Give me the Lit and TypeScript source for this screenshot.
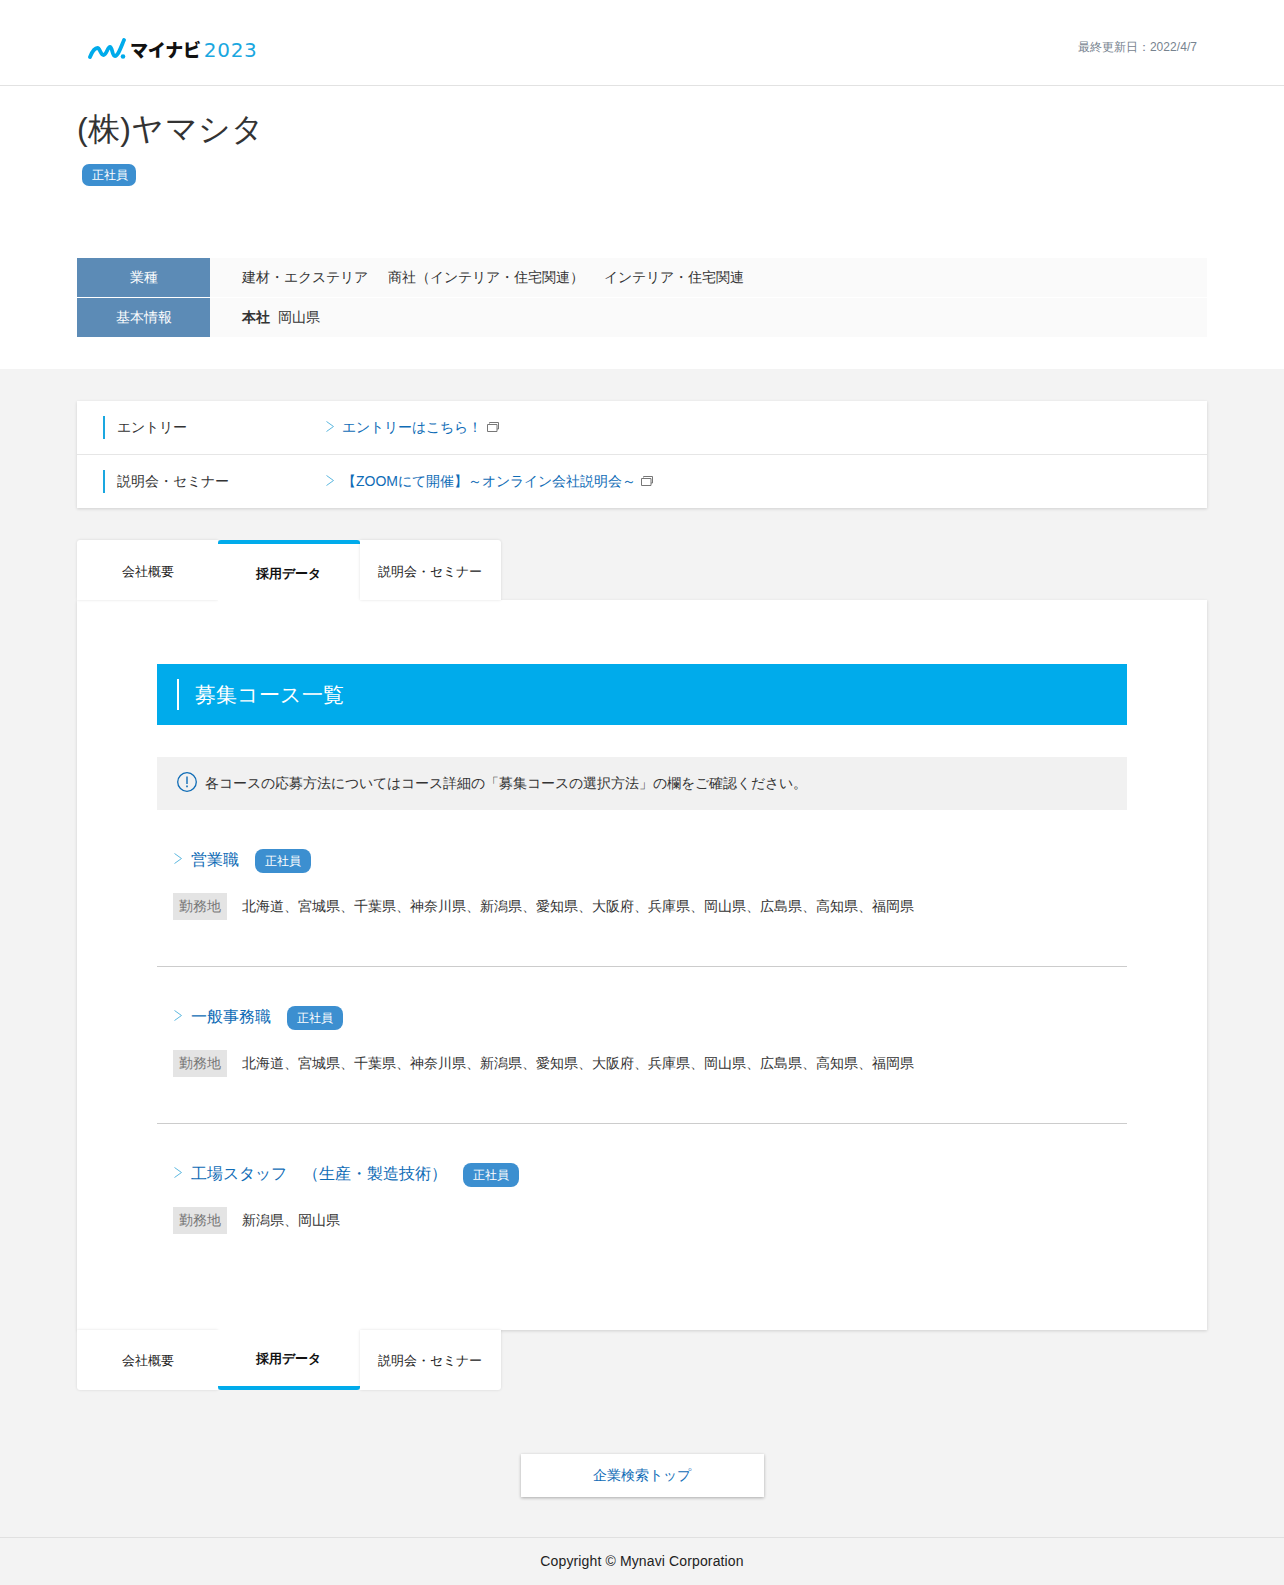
import { LitElement, html, css } from "lit";
import { customElement } from "lit/decorators.js";

const arrow = html`<svg class="arrow" viewBox="0 0 10 13" width="10" height="13"><path d="M1.5 1.5l7 5-7 5" fill="none" stroke="#5cb8e0" stroke-width="1"/></svg>`;
const ext = html`<svg class="ext" viewBox="0 0 12 10" width="12" height="10"><path d="M2.5 1.5V.5h9v6.5H10" fill="none" stroke="#777" stroke-width="1"/><path d="M.5 2.5h9.5v7H.5z" fill="none" stroke="#777" stroke-width="1"/></svg>`;
const courses = [
  { t: "営業職", p: "北海道、宮城県、千葉県、神奈川県、新潟県、愛知県、大阪府、兵庫県、岡山県、広島県、高知県、福岡県" },
  { t: "一般事務職", p: "北海道、宮城県、千葉県、神奈川県、新潟県、愛知県、大阪府、兵庫県、岡山県、広島県、高知県、福岡県" },
  { t: "工場スタッフ　（生産・製造技術）", p: "新潟県、岡山県" },
];

@customElement("app-root")
export class AppRoot extends LitElement {
  static styles = css`
    :host { display: block; background: #f3f3f3; color: #333; font-family: "Liberation Sans", sans-serif; font-size: 14px; line-height: 1.5; }
    a { color: #0f6cb6; text-decoration: none; }
    .wrap { width: 1130px; margin: 0 auto; }
    .head { height: 85px; background: #fff; border-bottom: 1px solid #e2e2e2; }
    .head .wrap { display: flex; justify-content: space-between; align-items: center; height: 85px; box-sizing: border-box; padding-top: 12px; }
    .logo { display: flex; align-items: center; margin-left: 11px; height: 30px; }
    .logo-jp { font-family: "Noto Sans CJK JP", sans-serif; font-weight: 900; font-size: 18px; letter-spacing: -0.2px; color: #111; margin-left: 4px; line-height: 30px; }
    .logo-yr { font-family: "DejaVu Sans", sans-serif; font-size: 20px; color: #1aa7e0; margin-left: 3px; letter-spacing: .7px; line-height: 30px; padding-top: 2px; }
    .updated { font-size: 12px; color: #77838f; margin-right: 10px; margin-top: -4px; letter-spacing: .05px; }
    .top { background: #fff; height: 283px; box-sizing: border-box; padding-top: 19px; }
    h1 { margin: 0; font-weight: 400; font-size: 32px; letter-spacing: .35px; line-height: 48px; }
    .badge { display: inline-block; background: #3c8fd0; color: #fff; font-size: 12px; border-radius: 7px; padding: 0 10px; line-height: 22px; height: 22px; }
    .topbadge { margin: 11px 0 0 5px; line-height: 0; }
    .topbadge .badge { padding: 0 8px 0 10px; line-height: 22px; }
    .info { margin-top: 72px; display: grid; grid-template-columns: 133px 1fr; row-gap: 1px; }
    .info .th { background: #5c8bb6; color: #fff; text-align: center; line-height: 39px; height: 39px; }
    .info .td { background: #fafafa; padding-left: 32px; line-height: 39px; height: 39px; display: flex; }
    .info .td span { margin-right: 20px; }
    .info .td b { margin-right: 8px; }
    .links { margin-top: 32px; background: #fff; box-shadow: 0 1px 3px rgba(0,0,0,.15); }
    .lrow { display: flex; align-items: center; height: 53px; }
    .lrow + .lrow { border-top: 1px solid #e6e6e6; }
    .lrow .lab { width: 222px; margin-left: 26px; border-left: 2px solid #1aa7e0; padding-left: 12px; box-sizing: border-box; height: 23px; line-height: 22px; }
    .lrow .val { display: flex; align-items: center; }
    .lrow .arrow { margin-right: 7px; margin-top: -2px; }
    .lrow .ext { margin-left: 5px; margin-top: -2px; }
    .tabs { display: flex; position: relative; z-index: 1; }
    .tab { width: 141px; height: 60px; background: #fff; color: #222; font-size: 13px; display: flex; align-items: center; justify-content: center; box-shadow: 0 0 3px rgba(0,0,0,.12); box-sizing: border-box; }
    .tab.on { font-weight: 700; color: #111; box-shadow: none; width: 142px; padding-right: 2px; }
    .tab:last-child { padding-right: 2px; }
    .tabs.upper { margin-top: 32px; }
    .tabs.upper .tab:first-child { border-radius: 3px 0 0 0; }
    .tabs.upper .tab:last-child { border-radius: 0 3px 0 0; }
    .tabs.upper .tab.on { border-top: 4px solid #00abeb; height: 61px; margin-bottom: -1px; border-radius: 3px 3px 0 0; padding-top: 2px; }
    .tabs.upper .tab:not(.on) { padding-top: 4px; }
    .tabs.lower .tab:first-child { border-radius: 0 0 0 3px; }
    .tabs.lower .tab:last-child { border-radius: 0 0 3px 0; }
    .tabs.lower .tab.on { border-bottom: 4px solid #00abeb; padding-top: 2px; border-radius: 0 0 3px 3px; }
    .tabs.lower .tab:not(.on) { padding-top: 2px; }
    .panel { background: #fff; height: 730px; box-sizing: border-box; padding: 64px 80px 0; box-shadow: 0 1px 3px rgba(0,0,0,.15); }
    h2 { margin: 0; background: #00abeb; color: #fff; font-weight: 400; font-size: 21px; height: 61px; display: flex; align-items: center; padding-left: 20px; }
    h2 span { border-left: 2px solid #fff; padding-left: 16px; height: 31px; line-height: 32px; }
    .notice { margin-top: 32px; background: #f1f1f1; height: 53px; display: flex; align-items: center; padding-left: 20px; }
    .notice svg { margin-right: 8px; margin-top: -3px; }
    .course { padding: 39px 16px 0 16px; height: 157px; box-sizing: border-box; border-bottom: 1px solid #ccc; }
    .course:last-child { border-bottom: 0; }
    .ct { display: flex; align-items: center; height: 24px; }
    .ct a { font-size: 16px; margin-left: 1px; margin-top: -2px; }
    .ct .arrow { margin-right: 7px; margin-top: -5px; }
    .ct .badge { height: 24px; line-height: 24px; border-radius: 8px; margin-left: 16px; }
    .cp { margin-top: 20px; display: flex; align-items: center; }
    .cp i { font-style: normal; background: #e4e4e4; color: #777; height: 27px; line-height: 27px; width: 54px; text-align: center; margin-right: 15px; }
    .btn { display: block; width: 243px; height: 43px; line-height: 43px; text-align: center; background: #fff; margin: 64px auto 0; box-shadow: 0 1px 3px rgba(0,0,0,.3); }
    .foot { margin-top: 40px; height: 48px; border-top: 1px solid #e0e0e0; text-align: center; line-height: 46px; color: #222; box-sizing: border-box; font-size: 14px; letter-spacing: .13px; }
  `;

  private tabs(cls: string) {
    return html`<div class="tabs ${cls}">
      <div class="tab">会社概要</div>
      <div class="tab on">採用データ</div>
      <div class="tab">説明会・セミナー</div>
    </div>`;
  }

  render() {
    return html`
      <div class="head"><div class="wrap">
        <div class="logo">
          <svg width="38" height="22" viewBox="0 0 38 22">
            <path d="M2 19 C4 14 7 10 9.5 10 C12 10 12.5 17 15.5 17 C18.5 17 19.5 9 22 9 C24.5 9 24 18 27 18 C30 18 33 9 36 2" fill="none" stroke="#00abeb" stroke-width="3.8" stroke-linecap="round"/>
            <circle cx="35" cy="18.5" r="2.3" fill="#00abeb"/>
          </svg>
          <span class="logo-jp">マイナビ</span><span class="logo-yr">2023</span>
        </div>
        <div class="updated">最終更新日：2022/4/7</div>
      </div></div>
      <div class="top"><div class="wrap">
        <h1>(株)ヤマシタ</h1>
        <div class="topbadge"><span class="badge">正社員</span></div>
        <div class="info">
          <div class="th">業種</div>
          <div class="td"><span>建材・エクステリア</span><span>商社（インテリア・住宅関連）</span><span>インテリア・住宅関連</span></div>
          <div class="th">基本情報</div>
          <div class="td"><b>本社</b>岡山県</div>
        </div>
      </div></div>
      <div class="wrap">
        <div class="links">
          <div class="lrow"><div class="lab">エントリー</div><div class="val">${arrow}<a>エントリーはこちら！</a>${ext}</div></div>
          <div class="lrow"><div class="lab">説明会・セミナー</div><div class="val">${arrow}<a>【ZOOMにて開催】～オンライン会社説明会～</a>${ext}</div></div>
        </div>
        ${this.tabs("upper")}
        <div class="panel">
          <h2><span>募集コース一覧</span></h2>
          <div class="notice">
            <svg width="20" height="20" viewBox="0 0 20 20"><circle cx="10" cy="10" r="9.3" fill="none" stroke="#0f6cb6" stroke-width="1.3"/><path d="M10 4.5v7.5" stroke="#0f6cb6" stroke-width="1.4"/><path d="M10 13.6v1.6" stroke="#0f6cb6" stroke-width="1.6"/></svg>
            各コースの応募方法についてはコース詳細の「募集コースの選択方法」の欄をご確認ください。
          </div>
          ${courses.map(c => html`<div class="course">
            <div class="ct">${arrow}<a>${c.t}</a><span class="badge">正社員</span></div>
            <div class="cp"><i>勤務地</i><span>${c.p}</span></div>
          </div>`)}
        </div>
        ${this.tabs("lower")}
        <a class="btn">企業検索トップ</a>
      </div>
      <div class="foot">Copyright © Mynavi Corporation</div>
    `;
  }
}
